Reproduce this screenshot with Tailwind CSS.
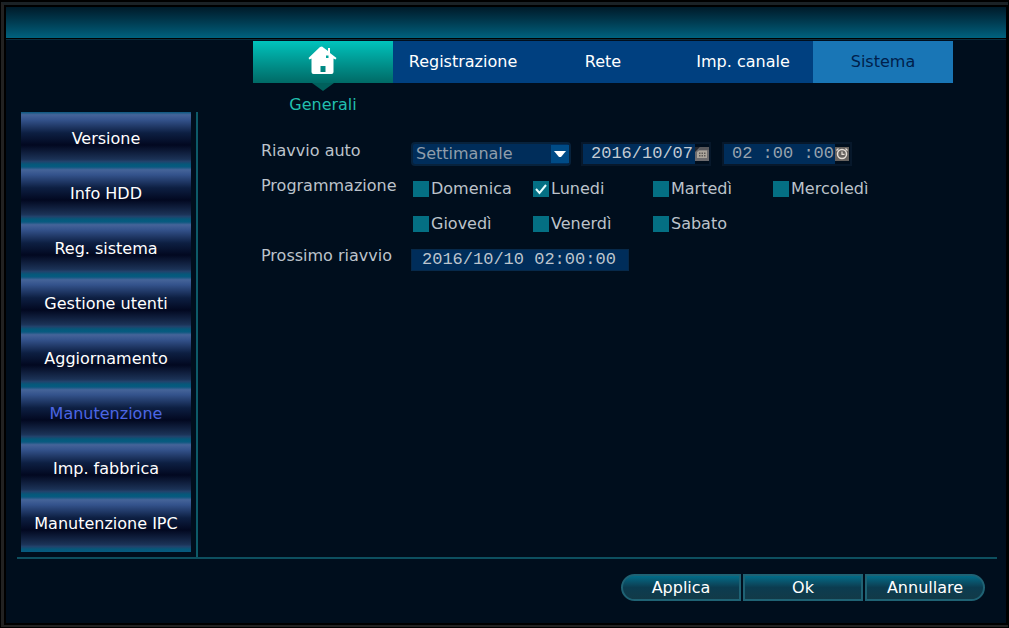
<!DOCTYPE html>
<html lang="it">
<head>
<meta charset="utf-8">
<title>Manutenzione</title>
<meta name="viewport" content="width=device-width, initial-scale=1">
<script src="https://cdn.jsdelivr.net/npm/@tailwindcss/browser@4"></script>
</head>
<body class="bg-black font-['DejaVu_Sans',Verdana,sans-serif] text-base">
<div class="min-h-screen p-px pt-[2px] flex flex-col">
<div class="grow flex flex-col border-l-[3px] border-t-[3px] border-b-2 border-l-[#222222] border-t-[#1b2226] border-b-[#222222] bg-black pt-[2px] pl-[2px] pr-[2px] pb-[2px]">
  <header class="h-[31px] shrink-0 bg-linear-to-b from-[#001b2a] to-[#00627f]"></header>
  <div class="grow flex flex-col mt-px border-t border-[#0a2c3d] bg-[#000e1d] pb-[22px]">

    <div class="grow flex pl-[15px]">
      <nav aria-label="Sezioni" class="w-[170px] shrink-0 mt-[72px] mb-[5px] flex flex-col text-white">
        <button class="h-[55px] shrink-0 pb-[2px] bg-[linear-gradient(#0a587f_0%,#456499_5%,#34538c_14%,#0d1f42_38%,#020820_60%,#1b3256_86%,#21436c_90%,#05587a_95%,#075b80_100%)]">Versione</button>
        <button class="h-[55px] shrink-0 pb-[2px] bg-[linear-gradient(#0a587f_0%,#456499_5%,#34538c_14%,#0d1f42_38%,#020820_60%,#1b3256_86%,#21436c_90%,#05587a_95%,#075b80_100%)]">Info HDD</button>
        <button class="h-[55px] shrink-0 pb-[2px] bg-[linear-gradient(#0a587f_0%,#456499_5%,#34538c_14%,#0d1f42_38%,#020820_60%,#1b3256_86%,#21436c_90%,#05587a_95%,#075b80_100%)]">Reg. sistema</button>
        <button class="h-[55px] shrink-0 pb-[2px] bg-[linear-gradient(#0a587f_0%,#456499_5%,#34538c_14%,#0d1f42_38%,#020820_60%,#1b3256_86%,#21436c_90%,#05587a_95%,#075b80_100%)]">Gestione utenti</button>
        <button class="h-[55px] shrink-0 pb-[2px] bg-[linear-gradient(#0a587f_0%,#456499_5%,#34538c_14%,#0d1f42_38%,#020820_60%,#1b3256_86%,#21436c_90%,#05587a_95%,#075b80_100%)]">Aggiornamento</button>
        <button aria-current="page" class="h-[55px] shrink-0 pb-[2px] bg-[linear-gradient(#0a587f_0%,#456499_5%,#34538c_14%,#0d1f42_38%,#020820_60%,#1b3256_86%,#21436c_90%,#05587a_95%,#075b80_100%)] text-[#4c66e4]">Manutenzione</button>
        <button class="h-[55px] shrink-0 pb-[2px] bg-[linear-gradient(#0a587f_0%,#456499_5%,#34538c_14%,#0d1f42_38%,#020820_60%,#1b3256_86%,#21436c_90%,#05587a_95%,#075b80_100%)]">Imp. fabbrica</button>
        <button class="h-[55px] shrink-0 pb-[2px] bg-[linear-gradient(#0a587f_0%,#456499_5%,#34538c_14%,#0d1f42_38%,#020820_60%,#1b3256_86%,#21436c_90%,#05587a_95%,#075b80_100%)]">Manutenzione IPC</button>
      </nav>
      <div class="w-[2px] shrink-0 mt-[72px] ml-[5px] bg-[#0d5a68]"></div>

      <main class="grow pl-[55px] pt-px">
        <nav aria-label="Menu" class="flex text-white">
          <div class="w-[140px] flex flex-col items-center">
            <button aria-label="Generali" class="w-full h-[42px] flex justify-center bg-linear-to-b from-[#00c4bd] to-[#006a66]">
              <svg class="mt-[5px] w-[30px] h-[28px]" viewBox="0 0 30 28" fill="#fff">
                <path fill-rule="evenodd" d="M14 .5 20 5V2H22V7L28.500 12 27.500 13.500 25.500 12.500V26Q25.500 28 23.500 28H5.500Q3.500 28 3.500 26V12.500L1.500 13.500.5 12 12 1ZM18 9.500V12H20.500V9.500ZM12.500 20V26H17.500V20Z"/>
              </svg>
            </button>
            <svg class="w-[22px] h-[8px]" viewBox="0 0 22 8"><path d="M0 0H22L11 8Z" fill="#00605c"/></svg>
            <span class="leading-[28px] text-[#21bfae]">Generali</span>
          </div>
          <button class="w-[140px] h-[42px] bg-[#004080]">Registrazione</button>
          <button class="w-[140px] h-[42px] bg-[#004080]">Rete</button>
          <button class="w-[140px] h-[42px] bg-[#004080]">Imp. canale</button>
          <button class="w-[140px] h-[42px] bg-[#1976b6] text-[#00204b]">Sistema</button>
        </nav>

        <form class="mt-[23px] pl-2 grid grid-cols-[150px_1fr] gap-y-[11px] text-[#bcc3cb]">
          <label for="mode" class="leading-[18px]">Riavvio auto</label>
          <div class="flex h-6">
            <div class="relative w-[160px]">
              <select id="mode" class="appearance-none block w-full h-6 pl-[3px] border-2 border-[#07223c] rounded-sm bg-[#002d5a] text-[#8f9dab] leading-5">
                <option>Settimanale</option>
              </select>
              <svg class="absolute right-[2px] top-[3px] w-[18px] h-[18px] bg-[#004b86] pointer-events-none" viewBox="0 0 18 18"><path d="M3 6H15L10 12H8Z" fill="#fff"/></svg>
            </div>
            <div class="ml-[10px] w-[130px] flex items-center border-2 border-[#07182b]">
              <input aria-label="Data" value="2016/10/07" class="w-[112px] h-5 pl-2 bg-[#002d5a] font-['Liberation_Mono',monospace] text-[17px] text-[#c3cbd3]">
              <button type="button" aria-label="Calendario">
                <svg class="w-[14px] h-[14px]" viewBox="0 0 14 14"><path d="M0 0H14V14H0Z" fill="#6c6b6e"/><path d="M0 0H5L0 5Z" fill="#24262c"/><path d="M5 0H14V3H4Z" fill="#58585c"/><path d="M2 5 4 3.500H12V11H2Z" fill="#aba59c"/><path d="M4 5.500H5.500V7H4ZM6.500 5.500H8V7H6.500ZM9 5.500H10.500V7H9ZM4 8H5.500V9.500H4ZM6.500 8H8V9.500H6.500ZM9 8H10.500V9.500H9Z" fill="#5c5856"/></svg>
              </button>
            </div>
            <div class="ml-[11px] w-[130px] flex items-center border-2 border-[#07182b]">
              <input aria-label="Ora" value="02 :00 :00" class="w-[111px] h-5 pl-2 bg-[#002d5a] font-['Liberation_Mono',monospace] text-[17px] text-[#98a3ae]">
              <button type="button" aria-label="Orologio">
                <svg class="w-[14px] h-[14px]" viewBox="0 0 14 14"><path d="M0 0H14V14H0Z" fill="#66625f"/><circle cx="7" cy="7" r="4.500" fill="none" stroke="#e6dfd7" stroke-width="1.500"/><path d="M7 4.500V7.300H9.500M1.500 3.500 3.500 1.500M10.500 1.500 12.500 3.500" fill="none" stroke="#e6dfd7" stroke-width="1.200"/></svg>
              </button>
            </div>
          </div>

          <span class="leading-[18px]">Programmazione</span>
          <div class="pl-[2px] grid grid-cols-[repeat(4,120px)] gap-y-[11px]">
            <label class="flex items-center gap-[2px] h-6"><input type="checkbox" class="appearance-none size-4 bg-[#046f83]">Domenica</label>
            <label class="relative flex items-center gap-[2px] h-6"><input type="checkbox" checked class="appearance-none size-4 bg-[#046f83]">Lunedi
              <svg class="absolute left-0 top-1 size-4 pointer-events-none" viewBox="0 0 16 16"><path d="M3 8 6.500 12 13 4" fill="none" stroke="#e8ffff" stroke-width="2"/></svg></label>
            <label class="flex items-center gap-[2px] h-6"><input type="checkbox" class="appearance-none size-4 bg-[#046f83]">Martedì</label>
            <label class="flex items-center gap-[2px] h-6"><input type="checkbox" class="appearance-none size-4 bg-[#046f83]">Mercoledì</label>
            <label class="flex items-center gap-[2px] h-6"><input type="checkbox" class="appearance-none size-4 bg-[#046f83]">Giovedì</label>
            <label class="flex items-center gap-[2px] h-6"><input type="checkbox" class="appearance-none size-4 bg-[#046f83]">Venerdì</label>
            <label class="flex items-center gap-[2px] h-6"><input type="checkbox" class="appearance-none size-4 bg-[#046f83]">Sabato</label>
          </div>

          <label for="next" class="leading-[18px]">Prossimo riavvio</label>
          <input id="next" readonly value="2016/10/10 02:00:00" class="w-[218px] h-[22px] mt-[2px] pl-[10px] border border-[#07294a] bg-[#002d5a] font-['Liberation_Mono',monospace] text-[17px] text-[#bcc5ce]">
        </form>
      </main>
    </div>

    <div class="h-[2px] ml-[11px] mr-[9px] bg-[#0d4f5f]"></div>
    <footer class="flex justify-end gap-[2px] pr-[21px] mt-[15px] text-white">
      <button class="w-[120px] h-[27px] border-2 border-[#1f6274] rounded-l-full bg-linear-to-b from-[#006c88] via-[#0b3c50] to-[#123a48] leading-5">Applica</button>
      <button class="w-[120px] h-[27px] border-2 border-[#1f6274] bg-linear-to-b from-[#006c88] via-[#0b3c50] to-[#123a48] leading-5">Ok</button>
      <button class="w-[120px] h-[27px] border-2 border-[#1f6274] rounded-r-full bg-linear-to-b from-[#006c88] via-[#0b3c50] to-[#123a48] leading-5">Annullare</button>
    </footer>
  </div>
</div>
</div>
</body>
</html>
